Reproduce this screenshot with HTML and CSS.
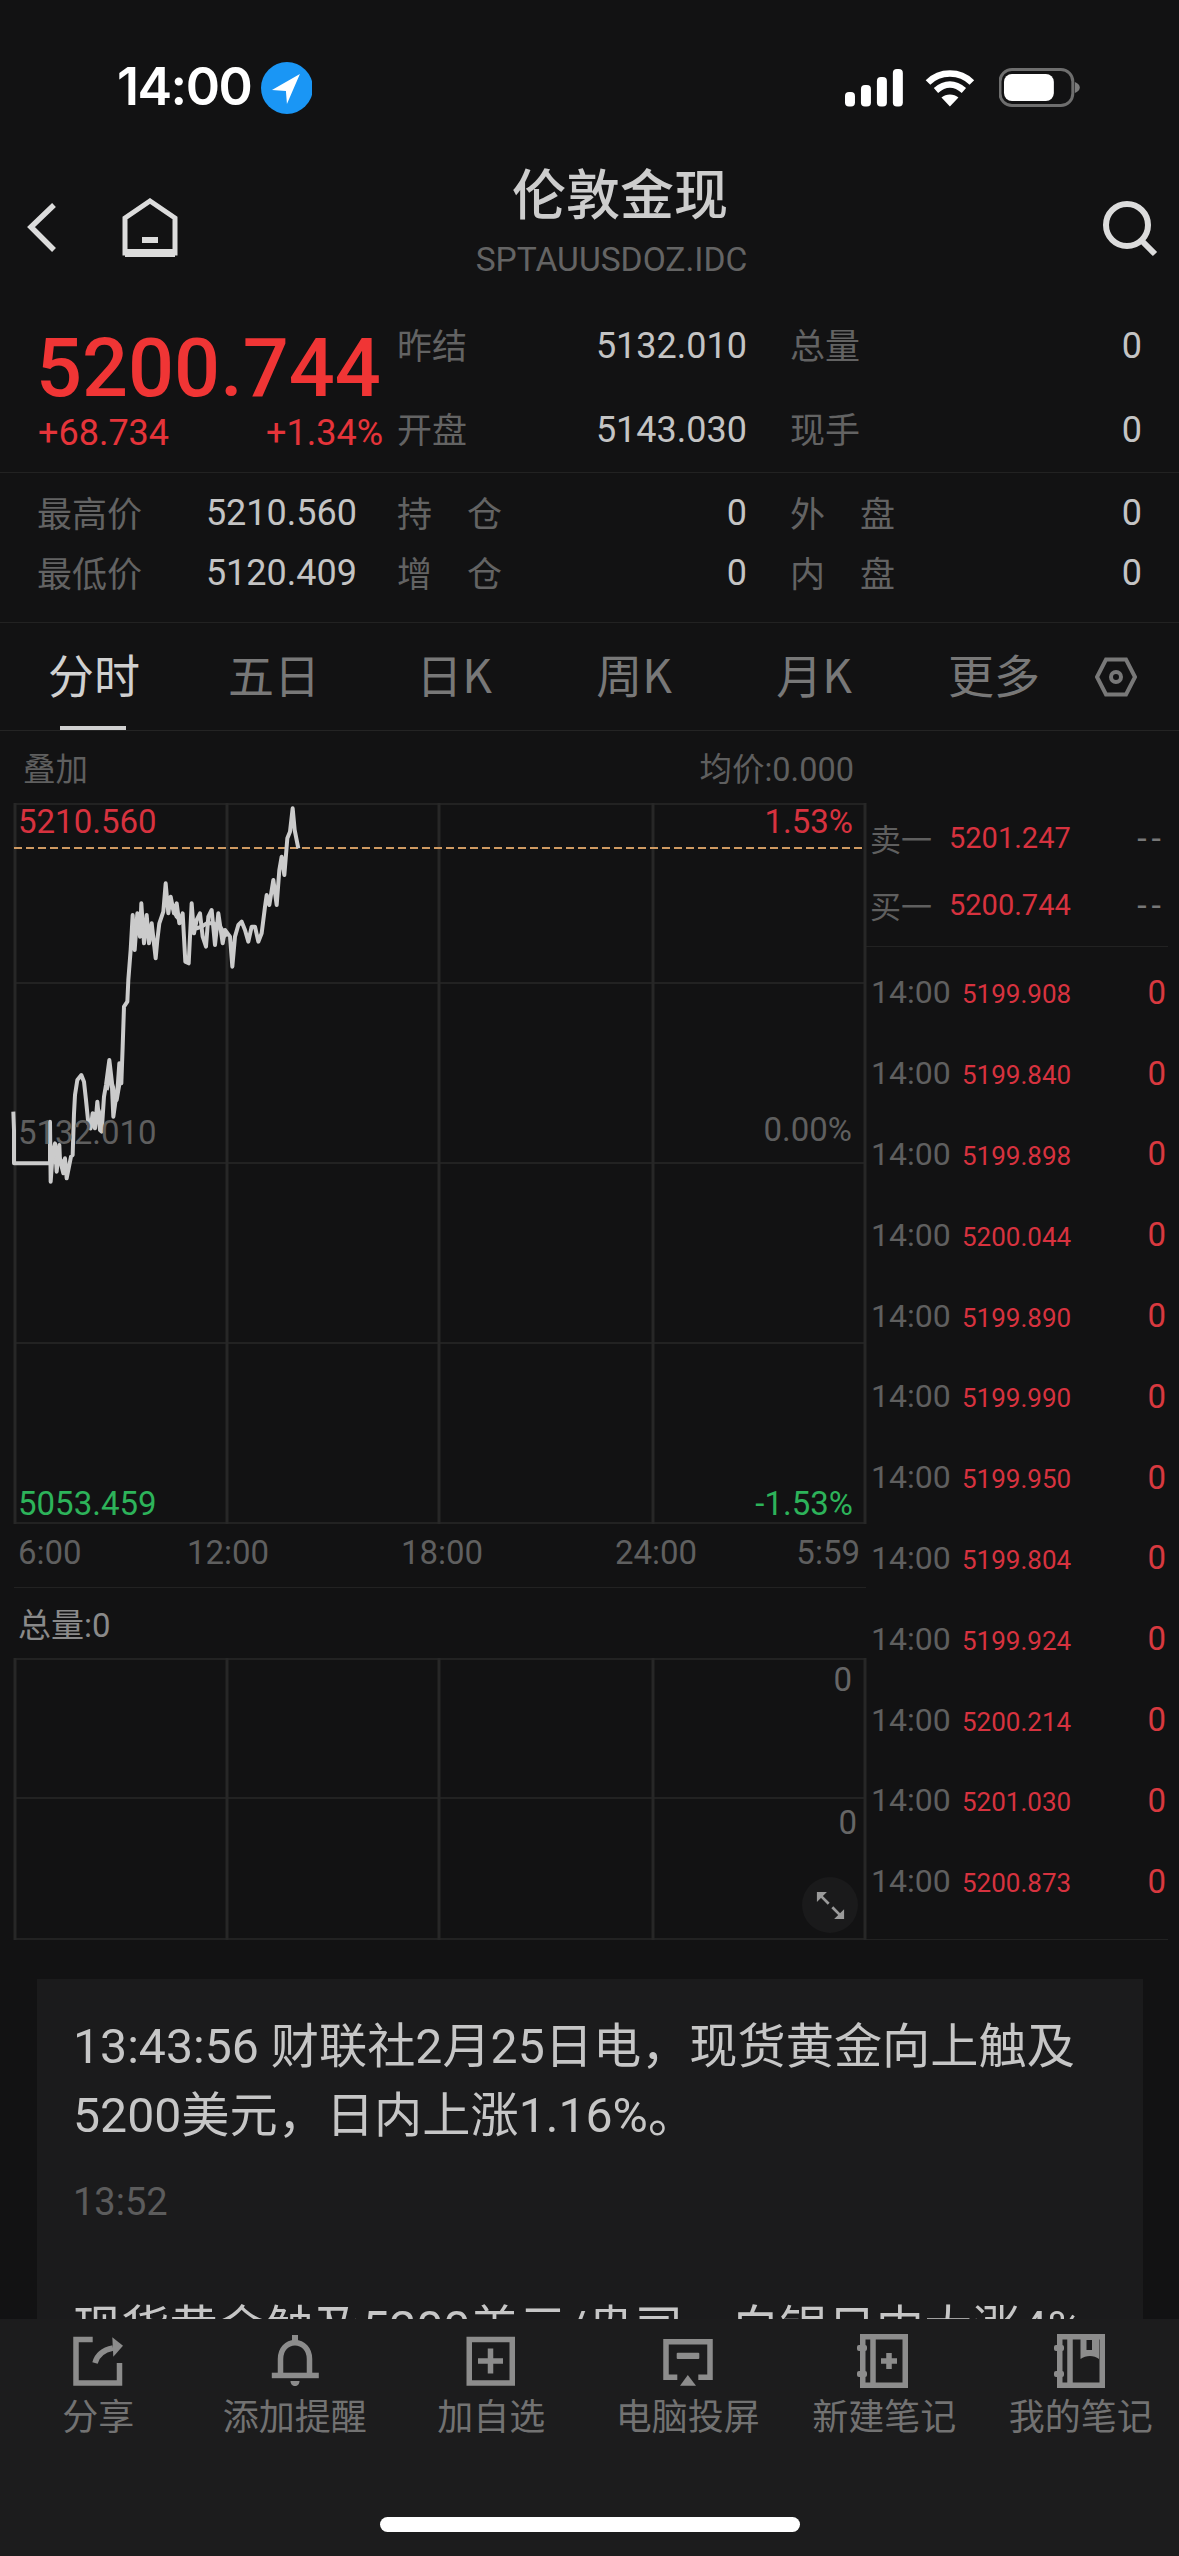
FILE: index.html
```html
<!DOCTYPE html>
<html lang="zh-CN">
<head>
<meta charset="utf-8">
<title>伦敦金现</title>
<link rel="stylesheet" href="styles.css">
</head>
<body>
<div class="screen">
  <div class="content">
    <header class="status">
      <span class="clock">14:00</span>
      <svg class="loc" viewBox="0 0 52 52"><circle cx="26" cy="26" r="26" fill="#1a96f5"/><path d="M39 12 L11 28 L25 29 L26 42 Z" fill="#fff"/></svg>
      <svg class="signal" viewBox="0 0 58 38"><rect x="0" y="23" width="10" height="14.500" rx="4"/><rect x="16" y="16" width="10" height="21.500" rx="4"/><rect x="32" y="8" width="10" height="29.500" rx="4"/><rect x="48" y="0" width="10" height="37.500" rx="4"/></svg>
      <svg class="wifi" viewBox="0 0 52 38"><path d="M4 13.500 C16 1.500 36 1.500 48 13.500" /><path d="M12 21.500 C21 13.500 31 13.500 40 21.500"/><path d="M17.500 28.500 C22 24.500 30 24.500 34.500 28.500 L26 37.500 Z" class="wedge"/></svg>
      <svg class="batt" viewBox="0 0 82 40"><rect x="1" y="1.500" width="73" height="36" rx="12" fill="none" stroke="#6e6e6e" stroke-width="3"/><rect x="5" y="6" width="50" height="27" rx="8" fill="#fff"/><path d="M76 14 C79 15 81 17 81 19.500 C81 22 79 24 76 25 Z" fill="#7c7c7c"/></svg>
    </header>

    <nav class="nav">
      <svg class="nav-back" viewBox="0 0 34 60"><path d="M28 7 L5 29 L28 52" /></svg>
      <svg class="nav-home" viewBox="0 0 60 60"><path d="M5 55 V20 L30 3 L55 20 V55 Z"/><path d="M5 55 H55" class="heavy"/><rect x="22" y="39" width="16" height="6"/></svg>
      <div class="nav-title">
        <div class="title">伦敦金现</div>
        <div class="symbol">SPTAUUSDOZ.IDC</div>
      </div>
      <svg class="nav-search" viewBox="0 0 60 60"><circle cx="28" cy="27" r="21"/><path d="M42 42 L56 56"/></svg>
    </nav>

    <section class="quote">
      <div class="price-box">
        <div class="big-price">5200.744</div>
        <div class="change"><span>+68.734</span><span>+1.34%</span></div>
      </div>
      <div class="cells">
        <div class="cell"><span class="lab">昨结</span><span class="val">5132.010</span></div>
        <div class="cell"><span class="lab">总量</span><span class="val">0</span></div>
        <div class="cell"><span class="lab">开盘</span><span class="val">5143.030</span></div>
        <div class="cell"><span class="lab">现手</span><span class="val">0</span></div>
      </div>
    </section>

    <section class="stats">
      <div class="cell"><span class="lab">最高价</span><span class="val">5210.560</span></div>
      <div class="cell"><span class="lab">持　仓</span><span class="val">0</span></div>
      <div class="cell"><span class="lab">外　盘</span><span class="val">0</span></div>
      <div class="cell"><span class="lab">最低价</span><span class="val">5120.409</span></div>
      <div class="cell"><span class="lab">增　仓</span><span class="val">0</span></div>
      <div class="cell"><span class="lab">内　盘</span><span class="val">0</span></div>
    </section>

    <div class="tabs">
      <span class="tab active">分时</span>
      <span class="tab">五日</span>
      <span class="tab">日K</span>
      <span class="tab">周K</span>
      <span class="tab">月K</span>
      <span class="tab">更多</span>
      <svg class="tab-set" viewBox="0 0 42 40"><path d="M11 2.500 H31 L40 20 L31 37.500 H11 L2 20 Z"/><circle cx="21" cy="20" r="5"/></svg>
    </div>

    <div class="chart-head"><span>叠加</span><span>均价:0.000</span></div>

    <div class="market">
      <div class="charts">
        <div class="price-chart">
          <svg class="canvas" viewBox="0 0 852 721">
            <g class="gridlines">
              <path d="M0 1 H852 M0 180 H852 M0 360 H852 M0 540 H852 M0 720 H852"/>
              <path class="vline" d="M1 0 V721 M213 0 V721 M425 0 V721 M639 0 V721 M851 0 V721"/>
            </g>
            <path class="dash" d="M0 45 H852"/>
            <g transform="translate(-14,-23) scale(0.33333)">
              <path class="line" d="M40 995 L42 1050 L42 1150 L150 1150 L150 1025 L152 1205 L158 1120 L165 1090 L170 1175 L178 1095 L180 1140 L190 1180 L195 1135 L200 1195 L207 1160 L213 1130 L218 1125 L222 1000 L225 945 L232 900 L244 885 L252 905 L258 960 L265 1030 L272 1045 L278 1000 L285 1045 L292 965 L300 1050 L305 1055 L312 950 L318 915 L328 840 L335 900 L340 1010 L347 960 L352 935 L358 850 L364 910 L368 800 L372 680 L382 665 L385 600 L392 510 L398 405 L404 510 L412 400 L420 470 L424 370 L432 490 L440 405 L447 490 L455 430 L467 535 L472 480 L478 430 L490 395 L497 310 L505 400 L512 350 L522 400 L530 370 L538 430 L548 400 L556 545 L566 550 L575 370 L582 460 L590 420 L600 400 L608 470 L618 500 L625 410 L635 390 L645 495 L655 400 L668 490 L675 450 L690 470 L697 560 L705 470 L715 435 L725 425 L735 450 L745 485 L755 440 L765 440 L775 485 L785 460 L795 380 L800 345 L808 375 L820 300 L830 375 L838 270 L845 230 L853 285 L862 175 L870 155 L878 85 L884 150 L895 205"/>
              <path class="line" d="M398 450 L408 445 L420 440 L432 455 L445 450 L458 470 L465 500 M500 370 L515 375 L530 410 L545 425 M575 430 L590 445 L605 440 L620 430 L640 430 L660 440 L680 470 M160 1150 L175 1130 L190 1150 L205 1165 M262 1020 L280 1030 L295 990 L305 1020 M320 930 L330 890 L350 960 L362 890"/>
            </g>
          </svg>
          <span class="tag up tl">5210.560</span>
          <span class="tag up tr">1.53%</span>
          <span class="tag flat ml">5132.010</span>
          <span class="tag flat mr">0.00%</span>
          <span class="tag down bl">5053.459</span>
          <span class="tag down br">-1.53%</span>
        </div>
        <div class="axis"><span>6:00</span><span>12:00</span><span>18:00</span><span>24:00</span><span>5:59</span></div>
        <div class="vol-head">总量:0</div>
        <div class="vol-chart">
          <svg class="canvas" viewBox="0 0 852 282">
            <g class="gridlines">
              <path d="M0 1 H852 M0 140 H852 M0 281 H852"/>
              <path class="vline" d="M1 0 V282 M213 0 V282 M425 0 V282 M639 0 V282 M851 0 V282"/>
            </g>
          </svg>
          <span class="zero z1">0</span>
          <span class="zero z2">0</span>
          <button class="expand" type="button" aria-label="全屏">
            <svg viewBox="0 0 32 32"><path d="M4 4 L14 14 M18 18 L28 28"/><path class="head" d="M1 1 H12 L1 12 Z M31 31 H20 L31 20 Z"/></svg>
          </button>
        </div>
      </div>

      <aside class="book">
        <div class="asks">
          <div class="ask"><span class="ask-lab">卖一</span><span class="ask-price">5201.247</span><span class="ask-dash">--</span></div>
          <div class="ask"><span class="ask-lab">买一</span><span class="ask-price">5200.744</span><span class="ask-dash">--</span></div>
        </div>
        <div class="ticks">
          <div class="tick"><span class="t">14:00</span><span class="p">5199.908</span><span class="n">0</span></div>
          <div class="tick"><span class="t">14:00</span><span class="p">5199.840</span><span class="n">0</span></div>
          <div class="tick"><span class="t">14:00</span><span class="p">5199.898</span><span class="n">0</span></div>
          <div class="tick"><span class="t">14:00</span><span class="p">5200.044</span><span class="n">0</span></div>
          <div class="tick"><span class="t">14:00</span><span class="p">5199.890</span><span class="n">0</span></div>
          <div class="tick"><span class="t">14:00</span><span class="p">5199.990</span><span class="n">0</span></div>
          <div class="tick"><span class="t">14:00</span><span class="p">5199.950</span><span class="n">0</span></div>
          <div class="tick"><span class="t">14:00</span><span class="p">5199.804</span><span class="n">0</span></div>
          <div class="tick"><span class="t">14:00</span><span class="p">5199.924</span><span class="n">0</span></div>
          <div class="tick"><span class="t">14:00</span><span class="p">5200.214</span><span class="n">0</span></div>
          <div class="tick"><span class="t">14:00</span><span class="p">5201.030</span><span class="n">0</span></div>
          <div class="tick"><span class="t">14:00</span><span class="p">5200.873</span><span class="n">0</span></div>
        </div>
      </aside>
    </div>

    <article class="news">
      <p class="news-text">13:43:56 财联社2月25日电，现货黄金向上触及<br>5200美元，日内上涨1.16%。</p>
      <p class="news-time">13:52</p>
      <p class="news-text next">现货黄金触及5200美元/盎司，白银日内大涨4%</p>
    </article>
  </div>

  <footer class="toolbar">
    <div class="tools">
      <div class="tool">
        <svg viewBox="0 0 56 56"><path d="M22.700 6.500 H6 V50 H49.500 V30"/><path d="M25 30 C27 22 33 17 43 15"/><path class="fill" d="M42.300 4.300 L53 12.700 L43.300 23.700 Z"/></svg>
        <span>分享</span>
      </div>
      <div class="tool">
        <svg viewBox="0 0 56 56"><path d="M13.500 41 V26 C13.500 16 20 9.700 28 9.700 C36 9.700 42.500 16 42.500 26 V41"/><rect class="fill" x="25" y="2" width="6" height="6"/><rect class="fill" x="4.800" y="39.700" width="47" height="5.500"/><path class="fill" d="M23.500 48 H32.500 C32.500 51 30.500 53 28 53 C25.500 53 23.500 51 23.500 48 Z"/></svg>
        <span>添加提醒</span>
      </div>
      <div class="tool">
        <svg viewBox="0 0 56 56"><path d="M6.250 6.500 H49.250 V50 H6.250 Z"/><path d="M27.500 15.500 V40.500 M15 28 H40"/></svg>
        <span>加自选</span>
      </div>
      <div class="tool">
        <svg viewBox="0 0 56 56"><path d="M17.300 44.300 H6 V8.700 H50 V44.300 H38.300"/><rect class="fill" x="16.700" y="19.700" width="22.600" height="6.300" rx="1"/><path class="fill" d="M27.800 42 L36 52.700 H20 Z"/></svg>
        <span>电脑投屏</span>
      </div>
      <div class="tool">
        <svg viewBox="0 0 56 56"><path d="M6.750 3.750 H49.250 V52.250 H6.750 Z"/><path d="M17 4 V52"/><rect class="fill" x="1" y="12" width="10" height="6" rx="2"/><rect class="fill" x="1" y="38" width="10" height="6" rx="2"/><path d="M33 20 V36 M25 28 H41"/></svg>
        <span>新建笔记</span>
      </div>
      <div class="tool">
        <svg viewBox="0 0 56 56"><path d="M6.750 3.750 H49.250 V52.250 H6.750 Z"/><path d="M17 4 V52"/><rect class="fill" x="1" y="12" width="10" height="6" rx="2"/><rect class="fill" x="1" y="38" width="10" height="6" rx="2"/><path class="fill" d="M27.500 4 H46 V26 C41 22 33 22 27.500 26 Z"/><rect class="slot" x="33.500" y="7" width="5.500" height="10"/></svg>
        <span>我的笔记</span>
      </div>
    </div>
    <div class="home-bar"></div>
  </footer>
</div>
</body>
</html>
```

FILE: styles.css
```css
* { box-sizing: border-box; }
html, body { margin: 0; padding: 0; background: #121213; }
body {
  width: 1179px;
  height: 2556px;
  overflow: hidden;
  font-family: Roboto, "Noto Sans CJK SC", sans-serif;
  color: #c8c8c8;
}
p { margin: 0; }
.screen { height: 2556px; display: flex; flex-direction: column; overflow: hidden; }
.content { flex: 1; min-height: 0; overflow: hidden; }

/* status bar */
.status { height: 148px; padding: 57px 98px 0 117px; display: flex; align-items: flex-start; }
.clock { font: 600 52px/60px Inter, sans-serif; color: #fff; letter-spacing: -1.500px; width: 144px; }
.loc { width: 52px; height: 52px; margin-top: 5px; }
.signal { width: 58px; height: 38px; margin: 12px 0 0 533px; fill: #fff; }
.wifi { width: 52px; height: 38px; margin: 12px 0 0 21px; fill: none; stroke: #fff; stroke-width: 6.500px; }
.wifi .wedge { fill: #fff; stroke: none; }
.batt { width: 82px; height: 40px; margin: 11px 0 0 23px; }

/* nav */
.nav { height: 142px; padding: 0 20px 0 26px; display: flex; align-items: flex-start; }
.nav svg { margin-top: 50px; fill: none; stroke: #dcdcdc; }
.nav-back { width: 34px; height: 60px; stroke-width: 5.500px; }
.nav-home { width: 60px; height: 60px; margin-left: 60px; stroke-width: 5px; }
.nav-home .heavy { stroke-width: 8px; }
.nav-home rect { fill: #dcdcdc; stroke: none; }
.nav-title { width: 273px; margin-left: 295px; text-align: center; }
.title { font: 500 54px/70px "Noto Sans CJK SC", sans-serif; color: #cdcdcd; margin-top: 9px; padding-left: 17px; white-space: nowrap; }
.symbol { font: 400 33.600px/40px Roboto, sans-serif; color: #646464; margin-top: 13px; white-space: nowrap; }
.nav-search { width: 60px; height: 60px; margin-left: auto; stroke-width: 6px; }

/* quote */
.quote { height: 183px; display: flex; border-bottom: 1px solid #222; }
.price-box { width: 397px; padding: 34px 14px 0 36px; }
.big-price { font-size: 81px; line-height: 90px; font-weight: 500; color: #f03535; white-space: nowrap; }
.change { display: flex; justify-content: space-between; margin-top: -1px; padding-left: 2px; font-size: 36px; line-height: 40px; color: #e5343a; }
.cells { display: grid; grid-template-columns: 350px 395px; grid-auto-rows: 84px; padding-top: 14px; }
.cell { display: flex; justify-content: space-between; align-items: center; }
.cell:nth-child(2n) { padding-left: 43px; }
.lab { margin-bottom: 5px; font: 400 35px/1 "Noto Sans CJK SC", sans-serif; color: #636363; white-space: nowrap; }
.val { font-size: 36px; color: #c4c4c4; }
.stats { height: 150px; padding: 10px 0 0 37px; display: grid; grid-template-columns: 320px 350px 355px; column-gap: 40px; grid-auto-rows: 60px; border-bottom: 1px solid #222; }
.stats .cell:nth-child(2n) { padding-left: 0; }
.stats .cell:nth-child(3n) { padding-left: 3px; }
.stats .lab { margin-bottom: 3px; }

/* tabs */
.tabs { height: 108px; padding-left: 4px; display: flex; align-items: center; border-bottom: 1px solid #242424; }
.tab { position: relative; width: 180px; height: 107px; text-align: center; font: 400 46px/101px "Noto Sans CJK SC", Roboto, sans-serif; color: #787878; }
.tab.active { color: #d0d0d0; }
.tab.active::after { content: ""; position: absolute; left: 56px; bottom: 0; width: 66px; height: 4px; background: #d0d0d0; }
.tab-set { width: 42px; height: 40px; margin-left: 11px; fill: none; stroke: #787878; stroke-width: 4px; }

.chart-head { height: 72px; padding: 7px 325px 0 23px; display: flex; justify-content: space-between; align-items: center; font: 400 32.500px/1 Roboto, "Noto Sans CJK SC", sans-serif; color: #5f5f5f; }

/* market */
.market { display: flex; padding-left: 14px; }
.charts { width: 852px; }
.price-chart { position: relative; height: 721px; }
.vol-chart { position: relative; height: 282px; }
.canvas { display: block; width: 100%; height: 100%; overflow: visible; }
.gridlines { fill: none; stroke: #222; stroke-width: 2px; }
.gridlines .vline { stroke: #272727; stroke-width: 3px; }
.dash { fill: none; stroke: #cf9a62; stroke-width: 2px; stroke-dasharray: 8 4; }
.line { fill: none; stroke: #cbcbcb; stroke-width: 12px; stroke-linejoin: round; }
.tag { position: absolute; font-size: 33px; line-height: 40px; white-space: nowrap; }
.tag.up { color: #d7323f; }
.tag.flat { color: #5f5f5f; }
.tag.down { color: #2db35a; }
.tl { left: 4px; top: -1px; }
.tr { right: 13px; top: -1px; }
.ml { left: 4px; top: 310px; }
.mr { right: 14px; top: 307px; }
.bl { left: 4px; top: 681px; }
.br { right: 13px; top: 681px; }
.axis { height: 64px; padding-bottom: 6px; display: grid; grid-template-columns: 107px 214px 214px 214px 103px; align-items: center; border-bottom: 1px solid #222; font-size: 33px; color: #5f5f5f; text-align: center; }
.axis span:first-child { text-align: left; padding-left: 4px; }
.axis span:last-child { text-align: right; padding-right: 6px; }
.vol-head { height: 70px; padding: 4px 0 0 4px; display: flex; align-items: center; font: 400 33px/1 Roboto, "Noto Sans CJK SC", sans-serif; color: #8a8a8a; }
.zero { position: absolute; font-size: 33px; line-height: 40px; color: #666; }
.z1 { right: 14px; top: 2px; }
.z2 { right: 9px; top: 145px; }
.expand { position: absolute; left: 788px; top: 219px; width: 56px; height: 56px; padding: 14px; border: 0; border-radius: 50%; background: #1a1a1b; }
.expand svg { display: block; width: 29px; height: 29px; fill: none; stroke: #9a9a9a; stroke-width: 3px; }
.expand .head { fill: #9a9a9a; stroke: none; }

/* order book */
.book { width: 302px; height: 1137px; border-bottom: 1px solid #222; }
.asks { height: 144px; padding: 1px 2px 0 4px; border-bottom: 1px solid #222; display: grid; grid-auto-rows: 67px; align-content: start; }
.ask { display: grid; grid-template-columns: 79px 1fr auto; align-items: center; }
.ask-lab { font: 400 31px/1 "Noto Sans CJK SC", sans-serif; color: #5f5f5f; }
.ask-price { font-size: 29px; color: #d7323f; }
.ask-dash { font-size: 34px; letter-spacing: 5px; color: #777; }
.ticks { padding: 5px 2px 0 5px; }
.tick { height: 80.800px; display: grid; grid-template-columns: 91px 1fr auto; align-items: center; }
.t { font-size: 32px; color: #5f5f5f; }
.p { font-size: 26px; color: #d7323f; position: relative; top: 2px; }
.n { font-size: 33px; color: #d8393f; }

/* news */
.news { margin: 39px 36px 0 37px; padding: 33px 36px 0; background: #1b1b1c; }
.news-text { font: 400 48.200px/69px Roboto, "Noto Sans CJK SC", sans-serif; color: #c6c6c6; white-space: nowrap; }
.news-time { margin-top: 27px; font-size: 38px; line-height: 50px; color: #5c5c5c; }
.news-text.next { margin-top: 67px; }

/* toolbar */
.toolbar { flex: 0 0 237px; background: #1c1c1d; padding-top: 14px; }
.tools { display: grid; grid-template-columns: repeat(6, 196.500px); }
.tool { display: flex; flex-direction: column; align-items: center; color: #727272; }
.tool svg { width: 56px; height: 56px; fill: none; stroke: #8c8c8c; stroke-width: 5.500px; }
.tool svg .fill { fill: #8c8c8c; stroke: none; }
.tool svg .slot { fill: #1c1c1d; stroke: none; }
.tool span { margin-bottom: 3px; font: 400 36px/50px "Noto Sans CJK SC", sans-serif; white-space: nowrap; }
.home-bar { width: 420px; height: 15px; margin: 75px auto 0; border-radius: 8px; background: #fff; }
```
